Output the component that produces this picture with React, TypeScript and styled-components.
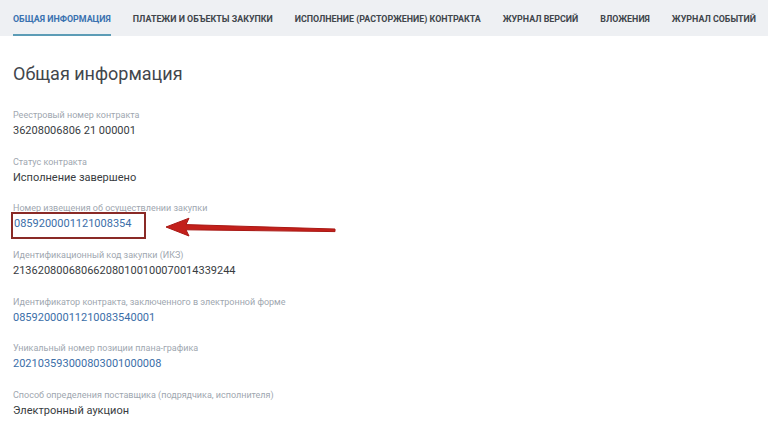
import styled, { createGlobalStyle } from "styled-components";

const GlobalStyle = createGlobalStyle`
  html, body {
    margin: 0;
    padding: 0;
    background: #ffffff;
    font-family: Roboto, "Liberation Sans", sans-serif;
  }
`;

const tabs = [
  "Общая информация",
  "Платежи и объекты закупки",
  "Исполнение (расторжение) контракта",
  "Журнал версий",
  "Вложения",
  "Журнал событий",
];

type Field = { label: string; value: string; link?: boolean; marked?: boolean };

const fields: Field[] = [
  { label: "Реестровый номер контракта", value: "36208006806 21 000001" },
  { label: "Статус контракта", value: "Исполнение завершено" },
  {
    label: "Номер извещения об осуществлении закупки",
    value: "0859200001121008354",
    link: true,
    marked: true,
  },
  {
    label: "Идентификационный код закупки (ИКЗ)",
    value: "213620800680662080100100070014339244",
  },
  {
    label: "Идентификатор контракта, заключенного в электронной форме",
    value: "08592000011210083540001",
    link: true,
  },
  {
    label: "Уникальный номер позиции плана-графика",
    value: "202103593000803001000008",
    link: true,
  },
  {
    label: "Способ определения поставщика (подрядчика, исполнителя)",
    value: "Электронный аукцион",
  },
];

export default function App() {
  return (
    <Page>
      <GlobalStyle />
      <TabBar>
        {tabs.map((t, i) => (
          <Tab key={t} active={i === 0}>
            {t}
          </Tab>
        ))}
      </TabBar>
      <Content>
        <Title>Общая информация</Title>
        <FieldList>
          {fields.map((f) => (
            <FieldItem key={f.label}>
              <Label>{f.label}</Label>
              <ValueRow>
                <Value link={f.link} marked={f.marked}>
                  {f.value}
                </Value>
                {f.marked && (
                  <Arrow width="172" height="22" viewBox="0 0 172 22">
                    <path
                      d="M1 11 L24 2.2 L21 8.6 L170 13 L170 15.6 L21 13.8 L24 20 Z"
                      fill="#c3201b"
                      stroke="#a81915"
                      strokeWidth="1"
                      strokeLinejoin="round"
                    />
                  </Arrow>
                )}
              </ValueRow>
            </FieldItem>
          ))}
        </FieldList>
      </Content>
    </Page>
  );
}

const Page = styled.div`
  width: 768px;
  height: 425px;
  overflow: hidden;
  background: #ffffff;
`;

const TabBar = styled.div`
  display: flex;
  gap: 22px;
  height: 36px;
  padding: 0 13px;
  background: #eef0f3;
  white-space: nowrap;
`;

const Tab = styled.div<{ active?: boolean }>`
  display: flex;
  align-items: center;
  height: 36px;
  box-sizing: border-box;
  padding-top: 4px;
  font-size: 8.9px;
  font-weight: 700;
  text-transform: uppercase;
  color: ${(p) => (p.active ? "#3a72b0" : "#40454b")};
  border-bottom: 2px solid ${(p) => (p.active ? "#5c9cb6" : "transparent")};
`;

const Content = styled.div`
  padding: 0 13px;
`;

const Title = styled.h1`
  margin: 26px 0 0;
  font-size: 18px;
  line-height: 24px;
  font-weight: 400;
  color: #42464c;
`;

const FieldList = styled.div`
  display: flex;
  flex-direction: column;
  gap: 17.7px;
  margin-top: 23px;
`;

const FieldItem = styled.div`
  display: flex;
  flex-direction: column;
`;

const Label = styled.div`
  font-size: 9px;
  line-height: 12px;
  color: #a0a7b0;
`;

const ValueRow = styled.div`
  position: relative;
  display: flex;
  margin-top: 2px;
`;

const Value = styled.div<{ link?: boolean; marked?: boolean }>`
  font-size: 11px;
  line-height: 15px;
  color: ${(p) => (p.link ? "#3b6ea8" : "#383c41")};
  ${(p) =>
    p.marked &&
    `
    outline: 2px solid #8a2a26;
    padding: 2px 13px 6px 1px;
    margin: -2px 0 -6px 0;
  `}
`;

const Arrow = styled.svg`
  position: absolute;
  left: 152px;
  top: 0;
`;
